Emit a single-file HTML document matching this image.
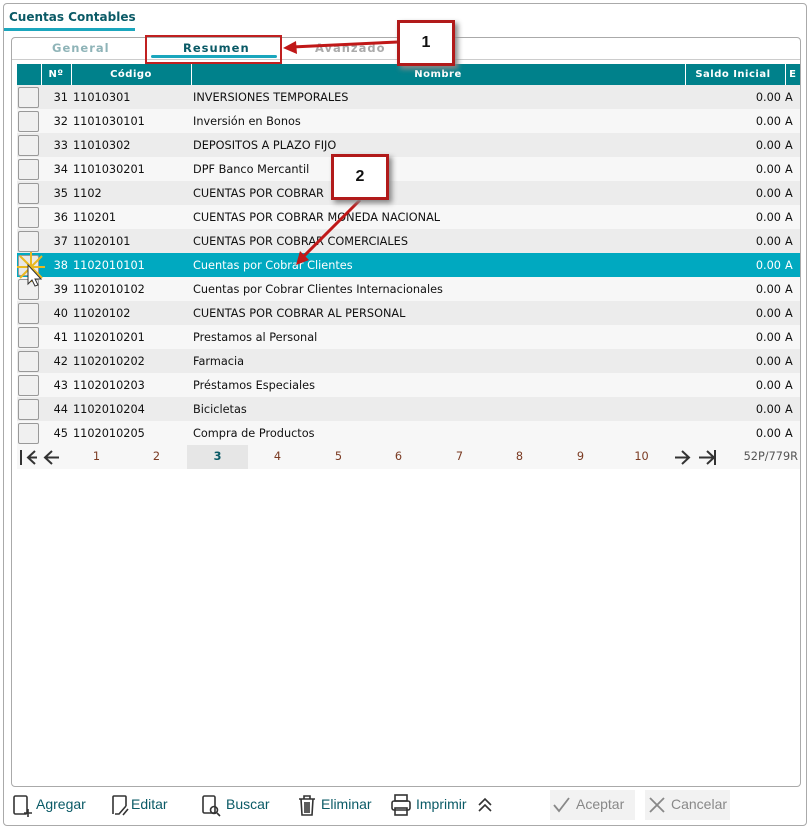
<!DOCTYPE html>
<html><head><meta charset="utf-8"><style>
*{box-sizing:border-box;margin:0;padding:0}
body{width:812px;height:829px;background:#fff;font-family:"DejaVu Sans",Verdana,sans-serif;font-size:11.3px;color:#111;position:relative;overflow:hidden}
.abs{position:absolute}
.outer{left:3px;top:3px;width:804px;height:823px;border:1px solid #aaa;border-radius:4px}
.title{left:9px;top:10px;font-weight:bold;color:#0a5a66;font-size:12px}
.tline{left:4px;top:28px;width:131px;height:3px;background:#1aa6bd}
.panel{left:11px;top:37px;width:790px;height:750px;border:1px solid #aaa;border-radius:4px}
.tabsep{left:12px;top:59px;width:788px;height:1px;background:#ccc}
.tab{top:41px;font-weight:bold;font-size:11.5px;letter-spacing:1px}
table{position:absolute;left:17px;top:64px;border-collapse:collapse;width:783px}
th{background:#00818b;color:#fff;font-size:10px;height:21px;border-right:1px solid #fff;font-weight:bold;letter-spacing:.5px}
td{height:24px;white-space:nowrap;padding:0}
tr.o td{background:#ececec}tr.e td{background:#f7f7f7}
tr.s td{background:#00a9c0;color:#fff}
td:nth-child(3){padding-left:2px}
.cb{width:21px;height:21px;border:1px solid #999;background:#f0f0f0;margin-left:1px;border-radius:2px}
.pager{left:17px;top:445px;width:783px;height:24px;background:#f7f7f7}
.pg{position:absolute;top:0;height:24px;line-height:24px;width:61px;text-align:center;color:#7a3a22}
.btn{top:796px;font-family:"Liberation Sans",sans-serif;font-size:14px;color:#0a5a66}
.box{background:#fff;border:3px solid #b11a1a;box-shadow:3px 3px 5px #888;font-family:"Liberation Sans",sans-serif;font-weight:bold;font-size:16px;text-align:center}
</style></head><body>
<div class="abs outer"></div>
<div class="abs title">Cuentas Contables</div>
<div class="abs tline"></div>
<div class="abs panel"></div>
<div class="abs tabsep"></div>
<div class="abs tab" style="left:52px;color:#8fb4b8">General</div>
<div class="abs tab" style="left:183px;color:#0a5a66">Resumen</div>
<div class="abs tab" style="left:315px;color:#aaa">Avanzado</div>
<div class="abs" style="left:151px;top:55px;width:126px;height:3px;background:#1aa6bd;border-radius:2px"></div>
<div class="abs" style="left:145px;top:35px;width:137px;height:29px;border:2px solid #c02020"></div>
<table>
<tr><th style="width:24px"></th><th style="width:30px">Nº</th><th style="width:120px">Código</th><th>Nombre</th><th style="width:100px;text-align:right;padding-right:14px">Saldo Inicial</th><th style="width:15px;border:0">E</th></tr>
<tr class="o"><td><div class="cb"></div></td><td style="text-align:right;padding-right:3px">31</td><td>11010301</td><td style="padding-left:2px">INVERSIONES TEMPORALES</td><td style="text-align:right;padding-right:4px">0.00</td><td>A</td></tr>
<tr class="e"><td><div class="cb"></div></td><td style="text-align:right;padding-right:3px">32</td><td>1101030101</td><td style="padding-left:2px">Inversión en Bonos</td><td style="text-align:right;padding-right:4px">0.00</td><td>A</td></tr>
<tr class="o"><td><div class="cb"></div></td><td style="text-align:right;padding-right:3px">33</td><td>11010302</td><td style="padding-left:2px">DEPOSITOS A PLAZO FIJO</td><td style="text-align:right;padding-right:4px">0.00</td><td>A</td></tr>
<tr class="e"><td><div class="cb"></div></td><td style="text-align:right;padding-right:3px">34</td><td>1101030201</td><td style="padding-left:2px">DPF Banco Mercantil</td><td style="text-align:right;padding-right:4px">0.00</td><td>A</td></tr>
<tr class="o"><td><div class="cb"></div></td><td style="text-align:right;padding-right:3px">35</td><td>1102</td><td style="padding-left:2px">CUENTAS POR COBRAR</td><td style="text-align:right;padding-right:4px">0.00</td><td>A</td></tr>
<tr class="e"><td><div class="cb"></div></td><td style="text-align:right;padding-right:3px">36</td><td>110201</td><td style="padding-left:2px">CUENTAS POR COBRAR MONEDA NACIONAL</td><td style="text-align:right;padding-right:4px">0.00</td><td>A</td></tr>
<tr class="o"><td><div class="cb"></div></td><td style="text-align:right;padding-right:3px">37</td><td>11020101</td><td style="padding-left:2px">CUENTAS POR COBRAR COMERCIALES</td><td style="text-align:right;padding-right:4px">0.00</td><td>A</td></tr>
<tr class="s"><td><div class="cb" style="background:#e8e8e8"></div></td><td style="text-align:right;padding-right:3px">38</td><td>1102010101</td><td style="padding-left:2px">Cuentas por Cobrar Clientes</td><td style="text-align:right;padding-right:4px">0.00</td><td>A</td></tr>
<tr class="e"><td><div class="cb"></div></td><td style="text-align:right;padding-right:3px">39</td><td>1102010102</td><td style="padding-left:2px">Cuentas por Cobrar Clientes Internacionales</td><td style="text-align:right;padding-right:4px">0.00</td><td>A</td></tr>
<tr class="o"><td><div class="cb"></div></td><td style="text-align:right;padding-right:3px">40</td><td>11020102</td><td style="padding-left:2px">CUENTAS POR COBRAR AL PERSONAL</td><td style="text-align:right;padding-right:4px">0.00</td><td>A</td></tr>
<tr class="e"><td><div class="cb"></div></td><td style="text-align:right;padding-right:3px">41</td><td>1102010201</td><td style="padding-left:2px">Prestamos al Personal</td><td style="text-align:right;padding-right:4px">0.00</td><td>A</td></tr>
<tr class="o"><td><div class="cb"></div></td><td style="text-align:right;padding-right:3px">42</td><td>1102010202</td><td style="padding-left:2px">Farmacia</td><td style="text-align:right;padding-right:4px">0.00</td><td>A</td></tr>
<tr class="e"><td><div class="cb"></div></td><td style="text-align:right;padding-right:3px">43</td><td>1102010203</td><td style="padding-left:2px">Préstamos Especiales</td><td style="text-align:right;padding-right:4px">0.00</td><td>A</td></tr>
<tr class="o"><td><div class="cb"></div></td><td style="text-align:right;padding-right:3px">44</td><td>1102010204</td><td style="padding-left:2px">Bicicletas</td><td style="text-align:right;padding-right:4px">0.00</td><td>A</td></tr>
<tr class="e"><td><div class="cb"></div></td><td style="text-align:right;padding-right:3px">45</td><td>1102010205</td><td style="padding-left:2px">Compra de Productos</td><td style="text-align:right;padding-right:4px">0.00</td><td>A</td></tr>
</table>
<div class="abs pager">
<svg class="abs" style="left:2px;top:4px" width="44" height="17" fill="none" stroke="#333" stroke-width="2"><path d="M2 1v15M16 2l-7 6.5 7 6.5M9 8.5h9"/><path d="M33 2l-7 6.5 7 6.5M26 8.5h14"/></svg>
<div class="pg" style="left:49px">1</div><div class="pg" style="left:109px">2</div>
<div class="pg" style="left:170px;background:#e6e6e6;color:#0a5a66;font-weight:bold">3</div>
<div class="pg" style="left:230px">4</div><div class="pg" style="left:291px">5</div><div class="pg" style="left:351px">6</div><div class="pg" style="left:412px">7</div><div class="pg" style="left:472px">8</div><div class="pg" style="left:533px">9</div><div class="pg" style="left:594px">10</div>
<svg class="abs" style="left:656px;top:4px" width="44" height="17" fill="none" stroke="#333" stroke-width="2"><path d="M9 2l7 6.5-7 6.5M2 8.5h14"/><path d="M34 2l7 6.5-7 6.5M26 8.5h14M42 1v15"/></svg>
<div class="abs" style="right:2px;top:0;line-height:24px;color:#555">52P/779R</div>
</div>
<svg class="abs" style="left:16px;top:250px" width="40" height="40"><g stroke="#e8b820" stroke-width="2"><path d="M4 6l22 22M26 6L4 28M15 2v30M1 17h28"/></g><path d="M12 15v19l4-4 3 6 3-1-3-6h6z" fill="#fff" stroke="#333"/></svg>
<svg class="abs" style="left:0;top:0" width="812" height="829" fill="none"><g stroke="#c01818" stroke-width="3"><path d="M398 42L292 47"/><path d="M360 200L303 257"/></g><path d="M283 48l13-7 1 13z" fill="#c01818"/><path d="M296 265l4-14 9 9z" fill="#c01818"/></svg>
<div class="abs box" style="left:397px;top:20px;width:58px;height:46px;line-height:40px">1</div>
<div class="abs box" style="left:331px;top:154px;width:58px;height:46px;line-height:40px">2</div>
<svg class="abs" style="left:12px;top:793px" width="500" height="26" fill="none" stroke="#333" stroke-width="1.6">
<rect x="2" y="3" width="13" height="18" rx="1.5"/><path d="M16 16v8M12 20h8"/>
<path d="M101 21V4a1 1 0 011-1h11a1 1 0 011 1v9M103 21h4l7-8M111 22l5-6"/>
<rect x="191" y="3" width="12" height="17" rx="1.5"/><circle cx="202" cy="17" r="3.5"/><path d="M205 20l3 3"/>
<path d="M287 6h16M292 6V3h6v3M289 6l1 16h10l1-16M293 9v11M295 9v11M297 9v11"/>
<rect x="383" y="2" width="12" height="6"/><rect x="380" y="8" width="18" height="9" rx="2"/><rect x="383" y="15" width="12" height="7"/>
<path d="M467 12l6-6 6 6M467 18l6-6 6 6"/></svg>
<div class="abs btn" style="left:36px">Agregar</div>
<div class="abs btn" style="left:131px">Editar</div>
<div class="abs btn" style="left:226px">Buscar</div>
<div class="abs btn" style="left:321px">Eliminar</div>
<div class="abs btn" style="left:416px">Imprimir</div>
<div class="abs" style="left:550px;top:790px;width:85px;height:30px;background:#f2f2f2"></div>
<div class="abs" style="left:645px;top:790px;width:85px;height:30px;background:#f2f2f2"></div>
<svg class="abs" style="left:552px;top:795px" width="180" height="20" fill="none" stroke="#888" stroke-width="1.8"><path d="M2 10l5 6 10-13"/><path d="M98 3l14 14M112 3L98 17"/></svg>
<div class="abs btn" style="left:576px;color:#888">Aceptar</div>
<div class="abs btn" style="left:671px;color:#888">Cancelar</div>
</body></html>
